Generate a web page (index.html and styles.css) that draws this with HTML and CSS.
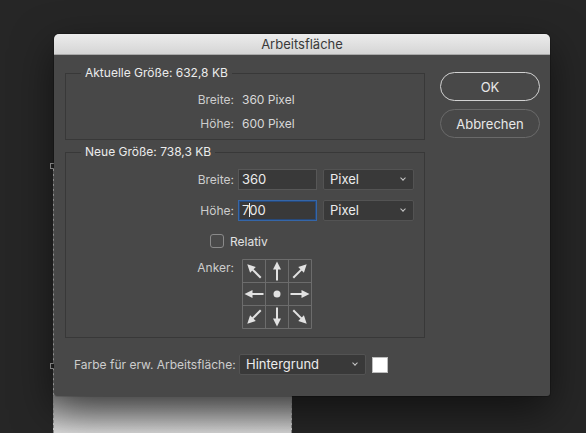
FILE: index.html
```html
<!DOCTYPE html>
<html lang="de">
<head>
  <meta charset="UTF-8">
  <meta name="viewport" content="width=device-width, initial-scale=1.0">
  <title>Arbeitsfläche</title>
  <link rel="stylesheet" href="styles.css">
</head>
<body>

  <div class="canvas-doc">
    <span class="handle handle-top"></span>
    <span class="handle handle-mid"></span>
  </div>

  <div class="dialog">
    <div class="titlebar">Arbeitsfläche</div>

    <div class="dialog-body">
      <div class="main">

        <fieldset class="group group-current">
          <legend>Aktuelle Größe: 632,8 KB</legend>
          <div class="info-row"><span class="label">Breite:</span><span class="value">360 Pixel</span></div>
          <div class="info-row"><span class="label">Höhe:</span><span class="value">600 Pixel</span></div>
        </fieldset>

        <fieldset class="group group-new">
          <legend>Neue Größe: 738,3 KB</legend>

          <div class="field-row">
            <span class="label">Breite:</span>
            <div class="input">360</div>
            <div class="select">Pixel<span class="chevron"></span></div>
          </div>

          <div class="field-row">
            <span class="label">Höhe:</span>
            <div class="input focused">7<span class="caret"></span>00</div>
            <div class="select">Pixel<span class="chevron"></span></div>
          </div>

          <div class="check-row">
            <span class="checkbox"></span>
            <span>Relativ</span>
          </div>

          <div class="anchor-row">
            <span class="label">Anker:</span>
            <svg class="anchor" width="70" height="70" viewBox="0 0 70 70">
              <defs>
                <g id="arrow">
                  <path d="M0 9.5V-2" stroke="#e2e2e2" stroke-width="2"/>
                  <path d="M0 -9.5L-4 -1.5L4 -1.5Z" fill="#e2e2e2"/>
                </g>
              </defs>
              <path d="M0.5 0.5H69.5V69.5H0.5Z M23.5 0.5V69.5 M46.5 0.5V69.5 M0.5 23.5H69.5 M0.5 46.5H69.5" fill="none" stroke="#6c6c6c"/>
              <use href="#arrow" transform="translate(12 12) rotate(-45)"/>
              <use href="#arrow" transform="translate(35 12)"/>
              <use href="#arrow" transform="translate(58 12) rotate(45)"/>
              <use href="#arrow" transform="translate(12 35) rotate(-90)"/>
              <circle cx="35" cy="35" r="3.5" fill="#e2e2e2"/>
              <use href="#arrow" transform="translate(58 35) rotate(90)"/>
              <use href="#arrow" transform="translate(12 58) rotate(-135)"/>
              <use href="#arrow" transform="translate(35 58) rotate(180)"/>
              <use href="#arrow" transform="translate(58 58) rotate(135)"/>
            </svg>
          </div>
        </fieldset>

        <div class="color-row">
          <span class="color-label">Farbe für erw. Arbeitsfläche:</span>
          <div class="select wide">Hintergrund<span class="chevron"></span></div>
          <span class="swatch"></span>
        </div>

      </div>

      <div class="buttons">
        <button class="btn primary">OK</button>
        <button class="btn">Abbrechen</button>
      </div>
    </div>
  </div>

</body>
</html>
```

FILE: styles.css
```css
body {
  margin: 0;
  padding: 34px 0 0 54px;
  height: 433px;
  box-sizing: border-box;
  overflow: hidden;
  position: relative;
  background-color: #262626;
  font-family: Inter, "Liberation Sans", sans-serif;
  font-size: 12px;
  color: #d6d6d6;
}

/* document canvas behind the dialog, shaded by its shadow */
.canvas-doc {
  position: absolute;
  left: 53px;
  top: 166px;
  width: 239px;
  height: 267px;
  box-sizing: border-box;
  background: linear-gradient(#f0f0f0 0, #f0f0f0 226px, #8e8e8e 230px, #dadada 267px);
  border: 1px dashed #8c8c8c;
  border-bottom: none;
}

.handle {
  position: absolute;
  left: -4px;
  width: 5px;
  height: 6px;
  box-sizing: border-box;
  border: 1px solid #a8a8a8;
  background-color: #262626;
}

.handle-top {
  top: -4px;
}

.handle-mid {
  top: 196px;
}

.dialog {
  position: relative;
  width: 496px;
  background-color: #484848;
  border-radius: 5px 5px 3px 3px;
  box-shadow: 0 14px 40px rgba(0, 0, 0, 0.55), 0 0 0 1px rgba(0, 0, 0, 0.2);
}

.titlebar {
  height: 20px;
  line-height: 20px;
  text-align: center;
  font-size: 13px;
  color: #3a3a3a;
  background: linear-gradient(#ececec, #d5d5d5);
  border-bottom: 1px solid #a9a9a9;
  border-radius: 5px 5px 0 0;
}

.dialog-body {
  display: flex;
  gap: 15px;
  padding: 10px 10px 21px 11px;
}

.main {
  width: 360px;
}

.group {
  margin: 0;
  padding: 6px 0 4px 0;
  border: 1px solid #383838;
  min-width: 0;
}

.group legend {
  margin-left: 15px;
  padding: 0 4px;
  line-height: 16px;
  color: #ececec;
}

.group-new {
  margin-top: 4px;
  padding: 9px 0 8px 0;
}

.label {
  width: 168px;
  flex-shrink: 0;
  text-align: right;
  color: #cdcdcd;
}

.info-row {
  display: flex;
  align-items: center;
  height: 24px;
}

.value {
  margin-left: 8px;
  color: #d8d8d8;
}

.field-row {
  display: flex;
  align-items: center;
  height: 21px;
}

.field-row + .field-row {
  margin-top: 10px;
}

.input {
  box-sizing: border-box;
  width: 79px;
  height: 21px;
  margin-left: 4px;
  padding-left: 3px;
  line-height: 19px;
  font-size: 13px;
  color: #ececec;
  background-color: #393939;
  border: 1px solid #575757;
}

.input.focused {
  border-color: #3566a8;
  box-shadow: inset 0 0 0 1px #27497a;
}

.caret {
  display: inline-block;
  width: 1px;
  height: 14px;
  margin: 0 -1px 0 0;
  vertical-align: -2px;
  background-color: #f0f0f0;
}

.select {
  position: relative;
  box-sizing: border-box;
  width: 91px;
  height: 21px;
  margin-left: 6px;
  padding-left: 6px;
  line-height: 19px;
  font-size: 13px;
  color: #ececec;
  background-color: #393939;
  border: 1px solid #535353;
  border-radius: 2px;
}

.chevron {
  position: absolute;
  right: 8px;
  top: 6px;
  width: 3px;
  height: 3px;
  border-right: 1px solid #c8c8c8;
  border-bottom: 1px solid #c8c8c8;
  transform: rotate(45deg);
}

.check-row {
  display: flex;
  align-items: center;
  gap: 6px;
  height: 14px;
  margin-top: 13px;
  padding-left: 144px;
  color: #e2e2e2;
}

.checkbox {
  width: 14px;
  height: 14px;
  box-sizing: border-box;
  border: 1px solid #8a8a8a;
  border-radius: 3px;
  background-color: #4a4a4a;
}

.anchor-row {
  display: flex;
  margin-top: 11px;
}

.anchor-row .label {
  line-height: 18px;
}

.anchor {
  display: block;
  margin-left: 8px;
}

.color-row {
  display: flex;
  align-items: center;
  height: 21px;
  margin-top: 16px;
  padding-left: 9px;
}

.color-label {
  width: 159px;
  flex-shrink: 0;
  white-space: nowrap;
  color: #cdcdcd;
}

.select.wide {
  width: 127px;
}

.swatch {
  width: 16px;
  height: 16px;
  margin-left: 6px;
  box-sizing: border-box;
  background-color: #fff;
  border: 1px solid #bdbdbd;
}

.buttons {
  display: flex;
  flex-direction: column;
  gap: 8px;
  padding-top: 7px;
}

.btn {
  width: 100px;
  height: 29px;
  border-radius: 15px;
  border: 1px solid #6a6a6a;
  background-color: transparent;
  font-family: Inter, "Liberation Sans", sans-serif;
  font-size: 13px;
  color: #e8e8e8;
  cursor: pointer;
}

.btn.primary {
  border-color: #d2d2d2;
}
```
